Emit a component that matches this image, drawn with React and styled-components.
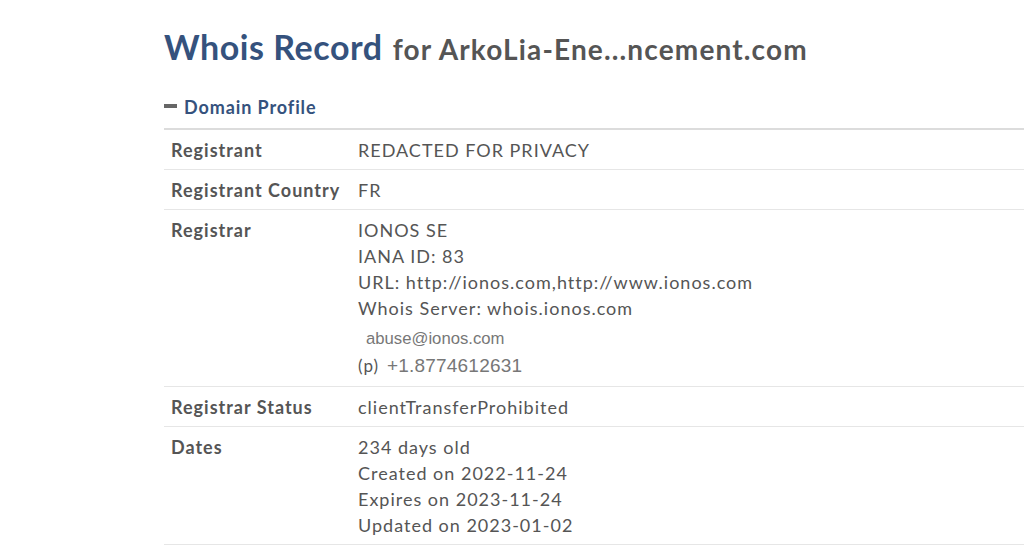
import React from "react";
import styled, { createGlobalStyle } from "styled-components";

const GlobalStyle = createGlobalStyle`
  body {
    margin: 0;
    background: #fff;
    font-family: Lato, "Open Sans", sans-serif;
    color: #555;
  }
`;

const rows = [
  { label: "Registrant", lines: ["REDACTED FOR PRIVACY"] },
  { label: "Registrant Country", lines: ["FR"] },
  {
    label: "Registrar",
    lines: [
      "IONOS SE",
      "IANA ID: 83",
      "URL: http://ionos.com,http://www.ionos.com",
      "Whois Server: whois.ionos.com",
    ],
    contact: true,
  },
  { label: "Registrar Status", lines: ["clientTransferProhibited"] },
  {
    label: "Dates",
    lines: [
      "234 days old",
      "Created on 2022-11-24",
      "Expires on 2023-11-24",
      "Updated on 2023-01-02",
    ],
  },
];

export default function App() {
  return (
    <Page>
      <GlobalStyle />
      <Heading>
        <Main>Whois Record</Main>
        <Sub>for ArkoLia-Ene...ncement.com</Sub>
      </Heading>
      <SectionTitle>
        <Minus />
        Domain Profile
      </SectionTitle>
      <Table>
        {rows.map((row) => (
          <Row key={row.label}>
            <Label>{row.label}</Label>
            <Value>
              {row.lines.map((line) => (
                <Line key={line}>{line}</Line>
              ))}
              {row.contact && (
                <>
                  <Email>abuse@ionos.com</Email>
                  <Phone>
                    <PhoneTag>(p)</PhoneTag>
                    <PhoneNumber>+1.8774612631</PhoneNumber>
                  </Phone>
                </>
              )}
            </Value>
          </Row>
        ))}
      </Table>
    </Page>
  );
}

const Page = styled.div`
  padding: 27px 0 0 164px;
  width: 1024px;
  box-sizing: border-box;
  overflow: hidden;
`;

const Heading = styled.h1`
  margin: 0;
  display: flex;
  align-items: baseline;
  gap: 10px;
  font-weight: 700;
  white-space: nowrap;
  line-height: 40px;
`;

const Main = styled.span`
  font-size: 34px;
  letter-spacing: 0.55px;
  color: #35527d;
`;

const Sub = styled.span`
  font-size: 28px;
  letter-spacing: 1.15px;
  color: #555;
`;

const SectionTitle = styled.div`
  display: flex;
  align-items: center;
  gap: 7px;
  margin-top: 27px;
  font-size: 18px;
  font-weight: 700;
  color: #35527d;
  letter-spacing: 0.9px;
`;

const Minus = styled.span`
  display: inline-block;
  width: 13px;
  height: 4px;
  background: #666;
  margin-bottom: 2px;
`;

const Table = styled.div`
  margin-top: 10px;
  border-top: 2px solid #dcdcdc;
  width: 900px;
`;

const Row = styled.div`
  display: grid;
  grid-template-columns: 194px 1fr;
  padding: 7px 0 6px;
  border-bottom: 1px solid #e6e6e6;
  font-size: 18px;
  line-height: 26px;
  letter-spacing: 1px;
`;

const Label = styled.div`
  padding-left: 7px;
  font-weight: 700;
  color: #555;
`;

const Value = styled.div`
  color: #555;
`;

const Line = styled.div``;

const Email = styled.div`
  padding: 5px 0 0 8px;
  font-family: "Liberation Sans", Arial, sans-serif;
  font-size: 16.7px;
  letter-spacing: 0;
  color: #777;
`;

const Phone = styled.div`
  display: flex;
  align-items: baseline;
  gap: 8px;
  line-height: 28px;
`;

const PhoneTag = styled.span`
  font-size: 17px;
`;

const PhoneNumber = styled.span`
  font-family: "Liberation Sans", Arial, sans-serif;
  font-size: 19px;
  letter-spacing: 0.2px;
  color: #777;
`;
